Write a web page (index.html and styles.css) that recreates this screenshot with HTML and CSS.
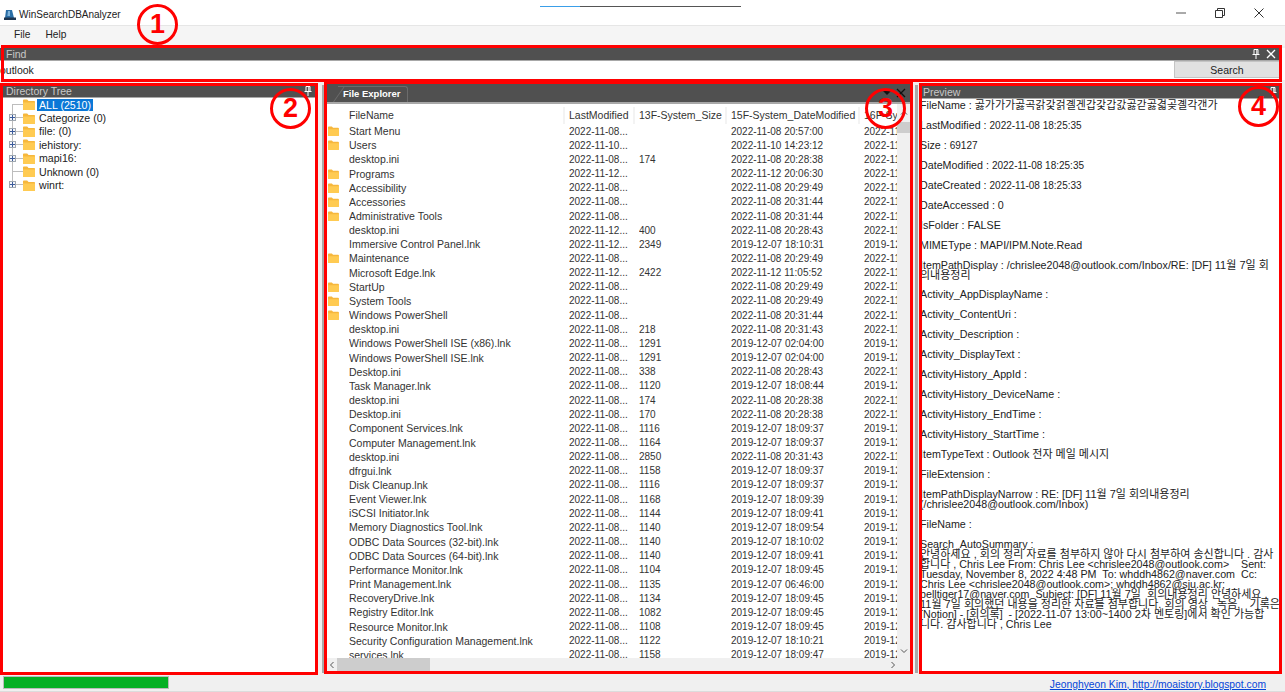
FILE: index.html
```html
<!DOCTYPE html>
<html lang="en">
<head>
    <meta charset="UTF-8">
    <title>WinSearchDBAnalyzer</title>
    <link rel="stylesheet" href="styles.css">
</head>
<body>
    <svg class="defs" width="0" height="0">
        <symbol id="folder" viewBox="0 0 12 11">
            <path d="M0 1.5C0 .8.5.5 1 .5h3.2l1.3 1.5H11c.6 0 1 .4 1 1V10c0 .6-.4 1-1 1H1c-.6 0-1-.4-1-1z" fill="#f6b73c"/>
            <path d="M0 3.6h12V10c0 .6-.4 1-1 1H1c-.6 0-1-.4-1-1z" fill="#ffcb52"/>
        </symbol>
        <symbol id="pin" viewBox="0 0 8 10">
            <path d="M2 .5h4v5H2zM.5 5.5h7M4 5.5V10M4.8 1v4" fill="none" stroke="currentColor"/>
        </symbol>
        <symbol id="cross" viewBox="0 0 10 10">
            <path d="M1 1l8 8M9 1l-8 8" fill="none" stroke="currentColor" stroke-width="1.3"/>
        </symbol>
    </svg>

    <div class="titlebar">
        <svg class="app-icon" viewBox="0 0 12 12"><path d="M2 1h6l2 8H1z" fill="#2a6ea6"/><path d="M4 2h2v5H3.400z" fill="#7fb4dc"/><path d="M0 8.500h12V11H0z" fill="#1d3550"/></svg>
        <span class="app-title">WinSearchDBAnalyzer</span>
        <div class="win-buttons">
            <svg class="win-btn" viewBox="0 0 10 10"><path d="M0 5h10" stroke="#555" fill="none"/></svg>
            <svg class="win-btn" viewBox="0 0 10 10"><path d="M.5 2.500h7v7h-7zM2.500 2.500v-2h7v7h-2" stroke="#333" fill="none"/></svg>
            <svg class="win-btn" viewBox="0 0 10 10"><path d="M.5.5l9 9M9.500.5l-9 9" stroke="#333" fill="none"/></svg>
        </div>
    </div>
    <div class="menubar">
        <span class="menu-item">File</span>
        <span class="menu-item">Help</span>
    </div>

    <div class="find-pane">
        <div class="pane-head">
            <span>Find</span>
            <span class="pane-tools">
                <svg class="tool-pin"><use href="#pin"/></svg>
                <svg class="tool-cross"><use href="#cross"/></svg>
            </span>
        </div>
        <div class="find-body">
            <input class="find-input" type="text" value="outlook">
            <button class="find-button" type="button">Search</button>
        </div>
    </div>

    <div class="main">
        <div class="tree-pane">
            <div class="pane-head">
                <span>Directory Tree</span>
                <span class="pane-tools"><svg class="tool-pin"><use href="#pin"/></svg></span>
            </div>
            <div class="tree-body">
                <div class="tree-row first"><span class="twig"></span><svg class="tree-folder"><use href="#folder"/></svg><span class="tree-label selected">ALL (2510)</span></div>
                <div class="tree-row"><span class="twig"><i class="plus"></i></span><svg class="tree-folder"><use href="#folder"/></svg><span class="tree-label">Categorize (0)</span></div>
                <div class="tree-row"><span class="twig"><i class="plus"></i></span><svg class="tree-folder"><use href="#folder"/></svg><span class="tree-label">file: (0)</span></div>
                <div class="tree-row"><span class="twig"><i class="plus"></i></span><svg class="tree-folder"><use href="#folder"/></svg><span class="tree-label">iehistory:</span></div>
                <div class="tree-row"><span class="twig"><i class="plus"></i></span><svg class="tree-folder"><use href="#folder"/></svg><span class="tree-label">mapi16:</span></div>
                <div class="tree-row"><span class="twig"></span><svg class="tree-folder"><use href="#folder"/></svg><span class="tree-label">Unknown (0)</span></div>
                <div class="tree-row last"><span class="twig"><i class="plus"></i></span><svg class="tree-folder"><use href="#folder"/></svg><span class="tree-label">winrt:</span></div>
            </div>
        </div>

        <div class="splitter"></div>

        <div class="explorer-pane">
            <div class="explorer-head">
                <span class="tab">File Explorer</span>
                <span class="pane-tools">
                    <span class="tool-drop"></span>
                    <svg class="tool-cross"><use href="#cross"/></svg>
                </span>
            </div>
            <div class="list-wrap">
                <div class="list">
                    <div class="row header"><span></span><span>FileName</span><span>LastModified</span><span>13F-System_Size</span><span>15F-System_DateModified</span><span>16F-System_DateCreated</span></div>
                    <div class="rows">
                        <div class="row"><svg class="row-folder"><use href="#folder"/></svg><span>Start Menu</span><span>2022-11-08...</span><span></span><span>2022-11-08 20:57:00</span><span>2022-11-08</span></div>
                        <div class="row"><svg class="row-folder"><use href="#folder"/></svg><span>Users</span><span>2022-11-10...</span><span></span><span>2022-11-10 14:23:12</span><span>2022-11-08</span></div>
                        <div class="row"><span></span><span>desktop.ini</span><span>2022-11-08...</span><span>174</span><span>2022-11-08 20:28:38</span><span>2022-11-08</span></div>
                        <div class="row"><svg class="row-folder"><use href="#folder"/></svg><span>Programs</span><span>2022-11-12...</span><span></span><span>2022-11-12 20:06:30</span><span>2022-11-08</span></div>
                        <div class="row"><svg class="row-folder"><use href="#folder"/></svg><span>Accessibility</span><span>2022-11-08...</span><span></span><span>2022-11-08 20:29:49</span><span>2022-11-08</span></div>
                        <div class="row"><svg class="row-folder"><use href="#folder"/></svg><span>Accessories</span><span>2022-11-08...</span><span></span><span>2022-11-08 20:31:44</span><span>2022-11-08</span></div>
                        <div class="row"><svg class="row-folder"><use href="#folder"/></svg><span>Administrative Tools</span><span>2022-11-08...</span><span></span><span>2022-11-08 20:31:44</span><span>2022-11-08</span></div>
                        <div class="row"><span></span><span>desktop.ini</span><span>2022-11-12...</span><span>400</span><span>2022-11-08 20:28:43</span><span>2022-11-08</span></div>
                        <div class="row"><span></span><span>Immersive Control Panel.lnk</span><span>2022-11-12...</span><span>2349</span><span>2019-12-07 18:10:31</span><span>2019-12-07</span></div>
                        <div class="row"><svg class="row-folder"><use href="#folder"/></svg><span>Maintenance</span><span>2022-11-08...</span><span></span><span>2022-11-08 20:29:49</span><span>2022-11-08</span></div>
                        <div class="row"><span></span><span>Microsoft Edge.lnk</span><span>2022-11-12...</span><span>2422</span><span>2022-11-12 11:05:52</span><span>2022-11-12</span></div>
                        <div class="row"><svg class="row-folder"><use href="#folder"/></svg><span>StartUp</span><span>2022-11-08...</span><span></span><span>2022-11-08 20:29:49</span><span>2022-11-08</span></div>
                        <div class="row"><svg class="row-folder"><use href="#folder"/></svg><span>System Tools</span><span>2022-11-08...</span><span></span><span>2022-11-08 20:29:49</span><span>2022-11-08</span></div>
                        <div class="row"><svg class="row-folder"><use href="#folder"/></svg><span>Windows PowerShell</span><span>2022-11-08...</span><span></span><span>2022-11-08 20:31:44</span><span>2022-11-08</span></div>
                        <div class="row"><span></span><span>desktop.ini</span><span>2022-11-08...</span><span>218</span><span>2022-11-08 20:31:43</span><span>2022-11-08</span></div>
                        <div class="row"><span></span><span>Windows PowerShell ISE (x86).lnk</span><span>2022-11-08...</span><span>1291</span><span>2019-12-07 02:04:00</span><span>2019-12-07</span></div>
                        <div class="row"><span></span><span>Windows PowerShell ISE.lnk</span><span>2022-11-08...</span><span>1291</span><span>2019-12-07 02:04:00</span><span>2019-12-07</span></div>
                        <div class="row"><span></span><span>Desktop.ini</span><span>2022-11-08...</span><span>338</span><span>2022-11-08 20:28:43</span><span>2022-11-08</span></div>
                        <div class="row"><span></span><span>Task Manager.lnk</span><span>2022-11-08...</span><span>1120</span><span>2019-12-07 18:08:44</span><span>2019-12-07</span></div>
                        <div class="row"><span></span><span>desktop.ini</span><span>2022-11-08...</span><span>174</span><span>2022-11-08 20:28:38</span><span>2022-11-08</span></div>
                        <div class="row"><span></span><span>Desktop.ini</span><span>2022-11-08...</span><span>170</span><span>2022-11-08 20:28:38</span><span>2022-11-08</span></div>
                        <div class="row"><span></span><span>Component Services.lnk</span><span>2022-11-08...</span><span>1116</span><span>2019-12-07 18:09:37</span><span>2019-12-07</span></div>
                        <div class="row"><span></span><span>Computer Management.lnk</span><span>2022-11-08...</span><span>1164</span><span>2019-12-07 18:09:37</span><span>2019-12-07</span></div>
                        <div class="row"><span></span><span>desktop.ini</span><span>2022-11-08...</span><span>2850</span><span>2022-11-08 20:31:43</span><span>2022-11-08</span></div>
                        <div class="row"><span></span><span>dfrgui.lnk</span><span>2022-11-08...</span><span>1158</span><span>2019-12-07 18:09:37</span><span>2019-12-07</span></div>
                        <div class="row"><span></span><span>Disk Cleanup.lnk</span><span>2022-11-08...</span><span>1116</span><span>2019-12-07 18:09:37</span><span>2019-12-07</span></div>
                        <div class="row"><span></span><span>Event Viewer.lnk</span><span>2022-11-08...</span><span>1168</span><span>2019-12-07 18:09:39</span><span>2019-12-07</span></div>
                        <div class="row"><span></span><span>iSCSI Initiator.lnk</span><span>2022-11-08...</span><span>1144</span><span>2019-12-07 18:09:41</span><span>2019-12-07</span></div>
                        <div class="row"><span></span><span>Memory Diagnostics Tool.lnk</span><span>2022-11-08...</span><span>1140</span><span>2019-12-07 18:09:54</span><span>2019-12-07</span></div>
                        <div class="row"><span></span><span>ODBC Data Sources (32-bit).lnk</span><span>2022-11-08...</span><span>1140</span><span>2019-12-07 18:10:02</span><span>2019-12-07</span></div>
                        <div class="row"><span></span><span>ODBC Data Sources (64-bit).lnk</span><span>2022-11-08...</span><span>1140</span><span>2019-12-07 18:09:41</span><span>2019-12-07</span></div>
                        <div class="row"><span></span><span>Performance Monitor.lnk</span><span>2022-11-08...</span><span>1104</span><span>2019-12-07 18:09:45</span><span>2019-12-07</span></div>
                        <div class="row"><span></span><span>Print Management.lnk</span><span>2022-11-08...</span><span>1135</span><span>2019-12-07 06:46:00</span><span>2019-12-07</span></div>
                        <div class="row"><span></span><span>RecoveryDrive.lnk</span><span>2022-11-08...</span><span>1134</span><span>2019-12-07 18:09:45</span><span>2019-12-07</span></div>
                        <div class="row"><span></span><span>Registry Editor.lnk</span><span>2022-11-08...</span><span>1082</span><span>2019-12-07 18:09:45</span><span>2019-12-07</span></div>
                        <div class="row"><span></span><span>Resource Monitor.lnk</span><span>2022-11-08...</span><span>1108</span><span>2019-12-07 18:09:45</span><span>2019-12-07</span></div>
                        <div class="row"><span></span><span>Security Configuration Management.lnk</span><span>2022-11-08...</span><span>1122</span><span>2019-12-07 18:10:21</span><span>2019-12-07</span></div>
                        <div class="row"><span></span><span>services.lnk</span><span>2022-11-08...</span><span>1158</span><span>2019-12-07 18:09:47</span><span>2019-12-07</span></div>
                    </div>
                </div>
                <div class="vscroll">
                    <svg class="arrow" viewBox="0 0 8 8"><path d="M1 5.500l3-3 3 3" fill="none" stroke="#555"/></svg>
                    <div class="vthumb"></div>
                    <svg class="arrow arrow-end" viewBox="0 0 8 8"><path d="M1 2.500l3 3 3-3" fill="none" stroke="#555"/></svg>
                </div>
            </div>
            <div class="hscroll">
                <svg class="arrow" viewBox="0 0 8 8"><path d="M5.500 1l-3 3 3 3" fill="none" stroke="#555"/></svg>
                <div class="hthumb"></div>
                <svg class="arrow arrow-end" viewBox="0 0 8 8"><path d="M2.500 1l3 3-3 3" fill="none" stroke="#555"/></svg>
            </div>
        </div>

        <div class="splitter narrow"></div>

        <div class="preview-pane">
            <div class="pane-head">
                <span>Preview</span>
                <span class="pane-tools"><svg class="tool-pin"><use href="#pin"/></svg></span>
            </div>
            <div class="preview-body">
                <p>FileName : <span class="ko">곯가가가곯곡갉갗걹곌겐갑갗갑갌곯갇곯겳곶곌각갠가</span></p>
                <p>LastModified : <span class="num">2022-11-08 18:25:35</span></p>
                <p>Size : <span class="num">69127</span></p>
                <p>DateModified : <span class="num">2022-11-08 18:25:35</span></p>
                <p>DateCreated : <span class="num">2022-11-08 18:25:33</span></p>
                <p>DateAccessed : 0</p>
                <p>IsFolder : FALSE</p>
                <p>MIMEType : MAPI/IPM.Note.Read</p>
                <p>ItemPathDisplay : /chrislee2048@outlook.com/Inbox/RE: [DF] <span class="ko">11월 7일 회<br>의내용정리</span></p>
                <p>Activity_AppDisplayName :</p>
                <p>Activity_ContentUri :</p>
                <p>Activity_Description :</p>
                <p>Activity_DisplayText :</p>
                <p>ActivityHistory_AppId :</p>
                <p>ActivityHistory_DeviceName :</p>
                <p>ActivityHistory_EndTime :</p>
                <p>ActivityHistory_StartTime :</p>
                <p>ItemTypeText : Outlook <span class="ko">전자 메일 메시지</span></p>
                <p>FileExtension :</p>
                <p>ItemPathDisplayNarrow : RE: [DF] <span class="ko">11월 7일 회의내용정리</span><br>(/chrislee2048@outlook.com/Inbox)</p>
                <p>FileName :</p>
                <p>Search_AutoSummary :<br><span class="ko">안녕하세요 , 회의 정리 자료를 첨부하지 않아 다시 첨부하여 송신합니다 . 감사<br>합니다</span> , Chris Lee From: Chris Lee &lt;chrislee2048@outlook.com&gt; &nbsp; &nbsp;Sent:<br>Tuesday, November 8, 2022 4:48 PM &nbsp;To: whddh4862@naver.com &nbsp;Cc:<br>Chris Lee &lt;chrislee2048@outlook.com&gt;; whddh4862@sju.ac.kr;<br>belltiger17@naver.com &nbsp;Subject: [DF] <span class="ko">11월 7일 &nbsp;회의내용정리 안녕하세요 ,<br>11월 7일 회의했던 내용을 정리한 자료를 첨부합니다. 회의 영상 , 녹음, &nbsp; 기록은</span><br>[Notion] - [<span class="ko">회의록</span>] &nbsp;- [2022-11-07 13:00~1400 <span class="ko">2차 멘토링</span>]<span class="ko">에서 확인 가능합<br>니다. 감사합니다</span> , Chris Lee</p>
            </div>
        </div>
    </div>

    <div class="statusbar">
        <div class="progress"></div>
        <a class="status-link" href="#">Jeonghyeon Kim, http://moaistory.blogspot.com</a>
    </div>

    <!-- annotations drawn on top of the screenshot -->
    <div class="loading-line"></div>
    <div class="mark mark-1"></div>
    <div class="mark mark-2"></div>
    <div class="mark mark-3"></div>
    <div class="mark mark-4"></div>
    <div class="badge badge-1">1</div>
    <div class="badge badge-2">2</div>
    <div class="badge badge-3">3</div>
    <div class="badge badge-4">4</div>
</body>
</html>
```

FILE: styles.css
```css
/* Basic layout */
html, body {
    margin: 0;
    height: 100%;
}
body {
    position: relative;
    width: 1285px;
    height: 692px;
    overflow: hidden;
    display: flex;
    flex-direction: column;
    background-color: #f0f0f0;
    color: #222;
    font-family: "Liberation Sans", "Noto Sans CJK KR", sans-serif;
    font-size: 10.5px;
}
.defs {
    position: absolute;
}

/* Title bar and menu */
.titlebar {
    height: 26px;
    flex: none;
    display: flex;
    align-items: center;
    background-color: #fff;
    border-bottom: 1px solid #e6e6e6;
    box-sizing: border-box;
    padding: 4px 0 0 4px;
}
.app-icon {
    width: 12px;
    height: 12px;
    margin-right: 3px;
}
.app-title {
    font-size: 10px;
}
.win-buttons {
    margin: -4px 0 0 auto;
    display: flex;
    gap: 29px;
    padding-right: 21px;
}
.win-btn {
    width: 10px;
    height: 10px;
}
.menubar {
    height: 20px;
    flex: none;
    box-sizing: border-box;
    display: flex;
    align-items: center;
    gap: 15px;
    padding: 0 0 4px 14px;
    background-color: #f5f5f5;
    font-size: 10.2px;
}

/* Dock panes */
.pane-head {
    height: 11px;
    flex: none;
    display: flex;
    align-items: center;
    justify-content: space-between;
    padding: 0 0 1px 6px;
    background-color: #505050;
    border-bottom: 1px solid #a8a8a8;
    color: #c8c8c8;
    font-size: 10.5px;
}
.pane-tools {
    display: flex;
    align-items: center;
    gap: 6px;
    padding-right: 4px;
    color: #fff;
}
.tool-pin {
    width: 8px;
    height: 10px;
}
.tool-cross {
    width: 10px;
    height: 10px;
}
.tool-drop {
    width: 0;
    height: 0;
    border: 4px solid transparent;
    border-top: 4px solid #111;
    border-bottom: 0;
}
.find-pane {
    height: 32px;
    flex: none;
    margin-top: 2px;
    padding-right: 5px;
    display: flex;
    flex-direction: column;
    background-color: #fff;
}
.find-body {
    flex: 1;
    display: flex;
    align-items: center;
    padding-bottom: 2px;
}
.find-input {
    flex: 1;
    border: none;
    outline: none;
    padding: 0;
    font: inherit;
    color: #222;
}
.find-button {
    width: 106px;
    height: 17px;
    padding: 0;
    background-color: #e1e1e1;
    border: 1px solid #c4c4c4;
    font: inherit;
    color: #222;
}

.main {
    height: 590px;
    flex: none;
    margin-top: 3px;
    display: flex;
}
.splitter {
    width: 11px;
    flex: none;
    box-sizing: border-box;
    margin-top: 2px;
    background: linear-gradient(to right, #f0f0f0 6px, #a9a9a9 6px, #a9a9a9 8px, #f0f0f0 8px);
}
.splitter.narrow {
    width: 9px;
    background: linear-gradient(to right, #f0f0f0 5px, #a9a9a9 5px, #a9a9a9 8px, #f0f0f0 8px);
}

/* Directory tree */
.tree-pane {
    width: 314px;
    flex: none;
    margin: 2px 0 0 2px;
    display: flex;
    flex-direction: column;
    background-color: #fff;
}
.tree-pane .pane-head {
    padding-left: 4px;
}
.tree-body {
    padding-left: 7px;
    flex: 1;
}
.tree-row {
    height: 13.4px;
    display: flex;
    align-items: center;
    font-size: 10.6px;
    white-space: nowrap;
}
.twig {
    position: relative;
    width: 14px;
    height: 100%;
    flex: none;
}
.twig::before {
    content: "";
    position: absolute;
    left: 3px;
    top: 0;
    bottom: 0;
    border-left: 1px solid #bdbdbd;
}
.twig::after {
    content: "";
    position: absolute;
    left: 3px;
    right: 0;
    top: 6px;
    border-top: 1px solid #bdbdbd;
}
.first .twig::before {
    top: 6px;
}
.last .twig::before {
    bottom: 6px;
}
.plus {
    position: absolute;
    z-index: 1;
    left: 0;
    top: 3px;
    width: 7px;
    height: 7px;
    border: 1px solid #a0a8b0;
    box-sizing: border-box;
    background: linear-gradient(#3a5a9a, #3a5a9a) center / 5px 1px no-repeat, linear-gradient(#3a5a9a, #3a5a9a) center / 1px 5px no-repeat, #f4f6fa;
}
.tree-folder {
    width: 12px;
    height: 11px;
    flex: none;
    margin-right: 2px;
}
.tree-label {
    padding: 0 2px;
    line-height: 12px;
}
.selected {
    background-color: #0a78d7;
    color: #fff;
}

/* File list */
.explorer-pane {
    width: 583px;
    flex: none;
    display: flex;
    flex-direction: column;
    background-color: #fff;
}
.explorer-head {
    height: 21px;
    flex: none;
    box-sizing: border-box;
    display: flex;
    align-items: flex-end;
    justify-content: space-between;
    padding-left: 11px;
    background-color: #505050;
    border-bottom: 2px solid #a8a8a8;
}
.explorer-head .pane-tools {
    align-self: center;
    gap: 5px;
    color: #111;
}
.tab {
    position: relative;
    height: 15px;
    line-height: 13px;
    padding: 0 6px 0 5px;
    border: 1px solid #6c6c6c;
    border-left: none;
    border-bottom: none;
    border-radius: 0 3px 0 0;
    color: #fff;
    font-weight: bold;
    font-size: 9.5px;
}
.tab::before {
    content: "";
    position: absolute;
    left: -5px;
    top: -1px;
    bottom: 0;
    width: 5px;
    border-left: 1px solid #6c6c6c;
    transform: skewX(-35deg);
    transform-origin: bottom left;
}
.list-wrap {
    height: 554px;
    flex: none;
    display: flex;
}
.list {
    flex: 1;
    min-width: 0;
    overflow: hidden;
}
.row {
    display: grid;
    grid-template-columns: 22px 220px 70px 92px 133px 60px;
    align-items: center;
    height: 14.16px;
    white-space: nowrap;
    color: #333;
}
.row > span {
    overflow: hidden;
}
.rows .row > span:nth-child(n+3) {
    font-size: 10px;
}
.row.header {
    height: 20px;
    padding-top: 2px;
    box-sizing: border-box;
}
.header > span {
    line-height: 17px;
    margin-right: 4px;
    border-right: 2px solid #f3f3f3;
}
.row-folder {
    width: 11px;
    height: 10px;
    margin-left: 1px;
}
.rows {
    height: 534px;
    overflow: hidden;
}
.vscroll {
    width: 13px;
    flex: none;
    display: flex;
    flex-direction: column;
    background-color: #f0f0f0;
}
.vthumb {
    height: 11px;
    margin-top: 5px;
    background-color: #cdcdcd;
}
.arrow {
    width: 8px;
    height: 8px;
    flex: none;
    margin: 5px 3px 0;
}
.arrow-end {
    margin: auto 3px 3px;
}
.hscroll {
    height: 13px;
    flex: none;
    display: flex;
    align-items: center;
    background-color: #f0f0f0;
}
.hscroll .arrow {
    margin: 0 1px;
}
.hthumb {
    width: 93px;
    height: 13px;
    background-color: #cdcdcd;
}
.hscroll .arrow-end {
    margin: 0 13px 0 auto;
}

/* Preview */
.preview-pane {
    width: 362px;
    flex: none;
    margin-top: 3px;
    display: flex;
    flex-direction: column;
    background-color: #fff;
}
.preview-pane .pane-head {
    padding-left: 4px;
}
.preview-body {
    flex: 1;
    padding: 1px 0 0 1px;
    overflow: hidden;
    color: #222;
    font-size: 10.7px;
    white-space: nowrap;
}
.preview-body p {
    margin: 0 0 9.95px;
    line-height: 10px;
}
.ko {
    font-size: 11px;
    line-height: 0;
}
.num {
    font-size: 10px;
    line-height: 0;
}

/* Status bar */
.statusbar {
    height: 16px;
    flex: none;
    margin-top: 3px;
    display: flex;
    align-items: center;
    justify-content: space-between;
    padding: 0 19px 3px 3px;
    box-sizing: border-box;
    border-bottom: 1px solid #dcdcdc;
}
.progress {
    width: 166px;
    height: 13px;
    background-color: #06b025;
    border: 1px solid #bcbcbc;
    box-sizing: border-box;
}
.status-link {
    color: #0645d8;
    font-size: 10.3px;
    padding-top: 4px;
}

/* Red annotations and loading line, over the window */
.loading-line {
    position: absolute;
    left: 540px;
    top: 6px;
    width: 201px;
    height: 1px;
    background: linear-gradient(to right, #3a9ee8 40px, #555 40px);
}
.mark {
    position: absolute;
    border: 3px solid #f00;
    box-sizing: border-box;
    z-index: 5;
}
.mark-1 {
    left: 1px;
    top: 45px;
    width: 1281px;
    height: 37px;
}
.mark-2 {
    left: 0;
    top: 83px;
    width: 318px;
    height: 592px;
}
.mark-3 {
    left: 324px;
    top: 81px;
    width: 589px;
    height: 593px;
}
.mark-4 {
    left: 919px;
    top: 83px;
    width: 363px;
    height: 591px;
}
.badge {
    position: absolute;
    z-index: 6;
    width: 41px;
    height: 41px;
    box-sizing: border-box;
    border: 3px solid #f00;
    border-radius: 50%;
    color: #f00;
    font-size: 27px;
    font-weight: bold;
    line-height: 35px;
    text-align: center;
}
.badge-1 {
    left: 137px;
    top: 4px;
}
.badge-2 {
    left: 270px;
    top: 88px;
}
.badge-3 {
    left: 865px;
    top: 88px;
}
.badge-4 {
    left: 1238px;
    top: 86px;
}
```
